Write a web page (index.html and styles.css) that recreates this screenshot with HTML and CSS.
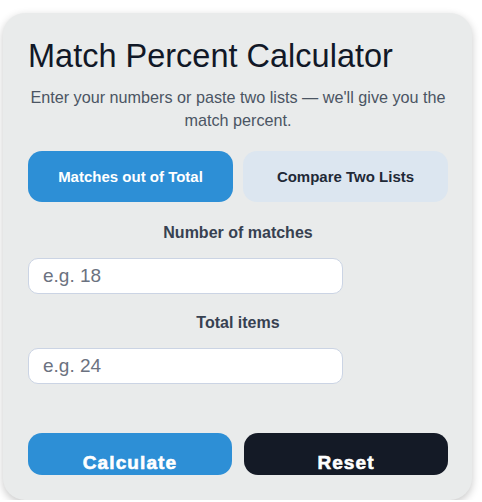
FILE: index.html
```html
<!DOCTYPE html>
<html lang="en">
<head>
  <meta charset="UTF-8">
  <meta name="viewport" content="width=device-width, initial-scale=1.0">
  <title>Match Percent Calculator</title>
  <link rel="stylesheet" href="styles.css">
</head>
<body>
  <main class="card">
    <h1>Match Percent Calculator</h1>
    <p class="intro">Enter your numbers or paste two lists — we'll give you the match percent.</p>

    <div class="tabs">
      <button class="tab active" type="button">Matches out of Total</button>
      <button class="tab" type="button">Compare Two Lists</button>
    </div>

    <form class="calc-form">
      <div class="form-group">
        <label for="matches">Number of matches</label>
        <input type="text" id="matches" placeholder="e.g. 18">
      </div>

      <div class="form-group">
        <label for="total">Total items</label>
        <input type="text" id="total" placeholder="e.g. 24">
      </div>

      <div class="actions">
        <button type="submit" class="btn btn-primary">Calculate</button>
        <button type="reset" class="btn btn-dark">Reset</button>
      </div>
    </form>
  </main>
</body>
</html>
```

FILE: styles.css
```css
:root {
  --blue: #2d8fd6;
  --dark: #141a26;
  --card: #e9ebeb;
  --tab: #dce6f0;
  --text: #111827;
  --muted: #4b5563;
}

* {
  margin: 0;
  padding: 0;
  box-sizing: border-box;
}

body {
  font-family: 'Liberation Sans', Arial, sans-serif;
  background-color: #fff;
  color: var(--text);
}

.card {
  margin: 13px 10px 0 3px;
  padding: 24px 24px 25px 25px;
  background-color: var(--card);
  border-radius: 22px;
  box-shadow: 0 3px 8px rgba(0, 0, 0, 0.22);
}

h1 {
  font-size: 32.5px;
  font-weight: 400;
  line-height: 38px;
  color: var(--text);
}

.intro {
  margin-top: 11px;
  font-size: 16.2px;
  line-height: 23px;
  color: var(--muted);
  text-align: center;
}

.tabs {
  display: grid;
  grid-template-columns: 1fr 1fr;
  gap: 10px;
  margin-top: 19px;
}

.tab {
  height: 51px;
  border: none;
  border-radius: 14px;
  background-color: var(--tab);
  color: #1f2937;
  font-family: inherit;
  font-size: 15px;
  font-weight: bold;
}

.tab.active {
  background-color: var(--blue);
  color: #fff;
}

.form-group {
  margin-top: 21px;
}

.form-group + .form-group {
  margin-top: 19px;
}

label {
  display: block;
  margin-bottom: 15px;
  font-size: 16px;
  line-height: 20px;
  font-weight: bold;
  color: #374151;
  text-align: center;
}

input {
  display: block;
  width: 75%;
  height: 36px;
  padding: 0 14px;
  border: 1px solid #cbd4e4;
  border-radius: 10px;
  background-color: #fff;
  font-family: inherit;
  font-size: 19px;
  color: var(--text);
}

input::placeholder {
  color: #6b7280;
}

.actions {
  display: grid;
  grid-template-columns: 1fr 1fr;
  gap: 12px;
  margin-top: 49px;
}

.btn {
  height: 42px;
  padding: 19px 0 1px;
  border: none;
  border-radius: 14px;
  font-family: inherit;
  font-size: 19px;
  line-height: 22px;
  font-weight: bold;
  letter-spacing: 1.1px;
  -webkit-text-stroke: 0.6px #fff;
  color: #fff;
}

.btn-primary {
  background-color: var(--blue);
}

.btn-dark {
  background-color: var(--dark);
}
```
